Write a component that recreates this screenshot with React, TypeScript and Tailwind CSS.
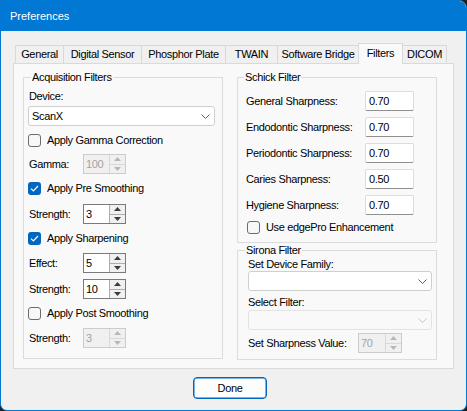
import type { ReactNode } from 'react'

const Chevron = ({ disabled = false }: { disabled?: boolean }) => (
  <svg width="9" height="5" viewBox="0 0 9 5" className="shrink-0">
    <polyline
      points="0.5,0.5 4.5,4.5 8.5,0.5"
      fill="none"
      stroke={disabled ? '#c4c4c4' : '#5c5c5c'}
      strokeWidth="1"
    />
  </svg>
)

const Check = ({ checked = false, label }: { checked?: boolean; label: string }) => (
  <div className="flex h-[16px] items-center">
    <div
      className={
        checked
          ? 'flex h-[13px] w-[13px] items-center justify-center rounded-[3px] bg-[#0067c0]'
          : 'h-[13px] w-[13px] rounded-[3px] border border-[#6b6b6b] bg-[#f7f7f7]'
      }
    >
      {checked && (
        <svg width="9" height="7" viewBox="0 0 9 7">
          <polyline points="1,3.6 3.4,6 8,1" fill="none" stroke="#fff" strokeWidth="1.2" />
        </svg>
      )}
    </div>
    <span className="ml-[6px]">{label}</span>
  </div>
)

const Spinner = ({ value, width = 43, disabled = false }: { value: string; width?: number; disabled?: boolean }) => (
  <div
    className={
      disabled
        ? 'flex h-[20px] border border-[#cccccc] bg-[#f0f0f0] text-[#a3a3a3]'
        : 'flex h-[20px] border border-[#7a7a7a] bg-white'
    }
    style={{ width }}
  >
    <div className="flex flex-1 items-center pl-[2px]">{value}</div>
    <div
      className={
        disabled
          ? 'flex w-[16px] flex-col border-l border-[#d9d9d9] bg-[#f0f0f0]'
          : 'flex w-[16px] flex-col border-l border-[#adadad] bg-[#f0f0f0]'
      }
    >
      <div className="flex flex-1 items-center justify-center">
        <svg width="7" height="4" viewBox="0 0 7 4">
          <polygon points="0,4 3.5,0 7,4" fill={disabled ? '#b8b8b8' : '#3c3c3c'} />
        </svg>
      </div>
      <div
        className={
          disabled
            ? 'flex flex-1 items-center justify-center border-t border-[#d9d9d9]'
            : 'flex flex-1 items-center justify-center border-t border-[#adadad]'
        }
      >
        <svg width="7" height="4" viewBox="0 0 7 4">
          <polygon points="0,0 7,0 3.5,4" fill={disabled ? '#b8b8b8' : '#3c3c3c'} />
        </svg>
      </div>
    </div>
  </div>
)

const Group = ({ title, titleMargin, height, children }: { title: string; titleMargin: string; height: string; children: ReactNode }) => (
  <div className={`flex w-[200px] flex-col border border-[#dcdcdc] ${height}`}>
    <span className={`-mt-[8px] self-start bg-[#f9f9f9] px-[1px] leading-[14px] ${titleMargin}`}>{title}</span>
    {children}
  </div>
)

const sharpness = [
  { label: 'General Sharpness:', value: '0.70' },
  { label: 'Endodontic Sharpness:', value: '0.70' },
  { label: 'Periodontic Sharpness:', value: '0.70' },
  { label: 'Caries Sharpness:', value: '0.50' },
  { label: 'Hygiene Sharpness:', value: '0.70' },
]

const tabs = [
  { label: 'General', w: 'w-[48px]' },
  { label: 'Digital Sensor', w: 'w-[78px]' },
  { label: 'Phosphor Plate', w: 'w-[84px]' },
  { label: 'TWAIN', w: 'w-[52px]' },
  { label: 'Software Bridge', w: 'w-[81px]' },
]

export default function App() {
  return (
    <div className="h-[411px] w-[467px] bg-[#1f1f1f] font-['Liberation_Sans',Arial,sans-serif] text-[11px] tracking-[-0.35px] text-black">
      <div className="flex h-full flex-col overflow-hidden rounded-tr-[8px] rounded-b-[7px] border border-[#0078d4] bg-[#f0f0f0]">
        {/* title bar */}
        <div className="flex h-[30px] items-center bg-[#0078d4] pl-[9px] tracking-normal text-white">
          Preferences
        </div>

        <div className="flex flex-col px-[12px] pt-[12px]">
          {/* tabs */}
          <div className="flex h-[20px] items-end pl-[2px]">
            {tabs.map((t) => (
              <div
                key={t.label}
                className={`flex h-[18px] items-center justify-center border-l border-t border-[#d9d9d9] bg-[#f0f0f0] ${t.w}`}
              >
                {t.label}
              </div>
            ))}
            <div className="relative z-10 -mb-[1px] flex h-[21px] w-[45px] items-center justify-center border-x border-t border-[#d9d9d9] bg-[#f9f9f9] pb-[2px]">
              Filters
            </div>
            <div className="flex h-[18px] w-[44px] items-center justify-center border-r border-t border-[#d9d9d9] bg-[#f0f0f0]">
              DICOM
            </div>
          </div>

          {/* panel */}
          <div className="flex h-[306px] gap-[14px] border border-[#dadada] bg-[#f9f9f9] pl-[9px] pt-[13px]">
            <Group title="Acquisition Filters" titleMargin="ml-[7px]" height="h-[282px]">
              <span className="ml-[5px] mt-[5px] leading-[14px]">Device:</span>
              <div className="ml-[4px] mt-[3px] flex h-[20px] w-[187px] items-center justify-between rounded-[3px] border border-[#cfcfcf] bg-white pl-[3px] pr-[4px]">
                <span>ScanX</span>
                <Chevron />
              </div>
              <div className="ml-[4px] mt-[6px]">
                <Check label="Apply Gamma Correction" />
              </div>
              <div className="mt-[6px] flex items-center">
                <span className="ml-[5px] w-[54px]">Gamma:</span>
                <Spinner value="100" disabled />
              </div>
              <div className="ml-[4px] mt-[6px]">
                <Check checked label="Apply Pre Smoothing" />
              </div>
              <div className="mt-[8px] flex items-center">
                <span className="ml-[5px] w-[54px]">Strength:</span>
                <Spinner value="3" />
              </div>
              <div className="ml-[4px] mt-[6px]">
                <Check checked label="Apply Sharpening" />
              </div>
              <div className="mt-[7px] flex items-center">
                <span className="ml-[5px] w-[54px]">Effect:</span>
                <Spinner value="5" />
              </div>
              <div className="mt-[6px] flex items-center">
                <span className="ml-[5px] w-[54px]">Strength:</span>
                <Spinner value="10" />
              </div>
              <div className="ml-[4px] mt-[6px]">
                <Check label="Apply Post Smoothing" />
              </div>
              <div className="mt-[7px] flex items-center">
                <span className="ml-[5px] w-[54px]">Strength:</span>
                <Spinner value="3" disabled />
              </div>
            </Group>

            <div className="flex flex-col gap-[7px]">
              <Group title="Schick Filter" titleMargin="ml-[6px]" height="h-[166px]">
                <div className="mt-[7px] flex flex-col gap-[6px]">
                  {sharpness.map((s) => (
                    <div key={s.label} className="flex h-[20px] items-center">
                      <span className="ml-[8px] w-[119px]">{s.label}</span>
                      <div className="flex h-[20px] w-[49px] items-center rounded-[2px] border border-[#dcdcdc] border-b-[#8f8f8f] bg-white pl-[3px]">
                        {s.value}
                      </div>
                    </div>
                  ))}
                </div>
                <div className="ml-[9px] mt-[4px]">
                  <Check label="Use edgePro Enhancement" />
                </div>
              </Group>

              <Group title="Sirona Filter" titleMargin="ml-[7px]" height="h-[110px]">
                <span className="ml-[10px] leading-[14px]">Set Device Family:</span>
                <div className="ml-[10px] flex h-[20px] w-[184px] items-center justify-end rounded-[3px] border border-[#cfcfcf] bg-white pr-[4px]">
                  <Chevron />
                </div>
                <span className="ml-[10px] mt-[4px] leading-[14px]">Select Filter:</span>
                <div className="ml-[10px] mt-[1px] flex h-[20px] w-[184px] items-center justify-end rounded-[3px] border border-[#e3e3e3] bg-[#f9f9f9] pr-[4px]">
                  <Chevron disabled />
                </div>
                <div className="mt-[3px] flex items-center">
                  <span className="ml-[10px] w-[110px]">Set Sharpness Value:</span>
                  <Spinner value="70" width={44} disabled />
                </div>
              </Group>
            </div>
          </div>

          {/* footer */}
          <div className="mt-[8px] flex">
            <button className="ml-[180px] flex h-[22px] w-[74px] items-center justify-center rounded-[4px] border border-[#0067c0] bg-[#fdfdfd] shadow-[inset_0_0_0_0.5px_#0067c0]">
              Done
            </button>
          </div>
        </div>
      </div>
    </div>
  )
}
